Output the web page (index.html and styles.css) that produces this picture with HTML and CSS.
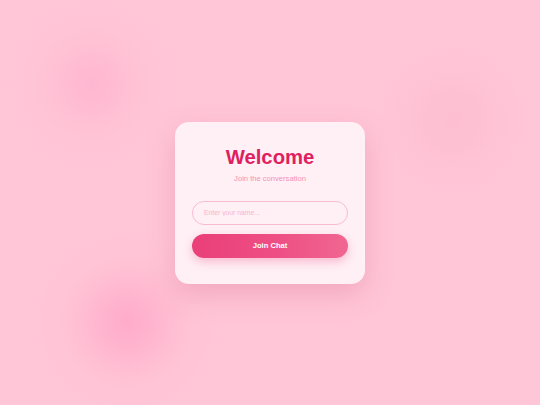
FILE: index.html
```html
<!DOCTYPE html>
<html lang="en">
<head>
<meta charset="utf-8">
<title>Join Chat</title>
<link rel="stylesheet" href="styles.css">
</head>
<body>
<main class="stage">
  <section class="card">
    <h1 class="title">Welcome</h1>
    <p class="subtitle">Join the conversation</p>
    <form class="form">
      <input class="name-input" type="text" placeholder="Enter your name...">
      <button class="join-btn" type="button">Join Chat</button>
    </form>
  </section>
</main>
</body>
</html>
```

FILE: styles.css
```css
html, body {
  margin: 0;
  padding: 0;
  height: 100%;
}
body {
  font-family: "Liberation Sans", Arial, sans-serif;
  background-color: #ffc6d7;
  background-image:
    radial-gradient(circle at 127px 322px, rgba(255, 168, 200, 0.9) 0, rgba(255, 172, 202, 0.7) 25px, rgba(255, 178, 205, 0.45) 45px, rgba(255, 186, 209, 0.2) 65px, rgba(255, 198, 215, 0) 90px),
    radial-gradient(circle at 92px 84px, rgba(255, 178, 206, 0.75) 0, rgba(255, 180, 207, 0.55) 25px, rgba(255, 186, 210, 0.3) 48px, rgba(255, 192, 212, 0.1) 68px, rgba(255, 195, 214, 0) 85px),
    radial-gradient(circle at 453px 120px, rgba(251, 184, 204, 0.6) 0, rgba(251, 186, 205, 0.45) 30px, rgba(252, 190, 208, 0.2) 55px, rgba(252, 196, 214, 0) 75px);
  overflow: hidden;
}
.stage {
  height: 100%;
  display: flex;
  align-items: center;
  justify-content: center;
}
.card {
  width: 190px;
  box-sizing: border-box;
  padding: 24px 17px 26px;
  background: #fff0f5;
  border-radius: 14px;
  box-shadow: 0 10px 28px rgba(210, 90, 130, 0.28);
  display: flex;
  flex-direction: column;
  align-items: center;
}
.title {
  margin: 0;
  font-size: 20.3px;
  font-weight: 700;
  line-height: 23px;
  color: #df1f5f;
}
.subtitle {
  margin: 5px 0 0;
  font-size: 7.6px;
  line-height: 9px;
  color: #f590b4;
}
.form {
  margin-top: 18px;
  width: 100%;
  display: flex;
  flex-direction: column;
  gap: 9px;
}
.name-input {
  box-sizing: border-box;
  width: 100%;
  height: 24px;
  margin: 0;
  padding: 0 11px;
  border: 1px solid #f8bcd2;
  border-radius: 12px;
  background: #fff0f6;
  font-family: "Liberation Sans", Arial, sans-serif;
  font-size: 6.8px;
  color: #d81b60;
  outline: none;
}
.name-input::placeholder {
  color: #f8b4cc;
}
.join-btn {
  box-sizing: border-box;
  width: 100%;
  height: 24px;
  margin: 0;
  padding: 0;
  border: none;
  border-radius: 12px;
  background: linear-gradient(90deg, #ea3f79 0%, #ee4f84 55%, #f06792 100%);
  box-shadow: 0 4px 10px rgba(236, 64, 122, 0.3);
  color: #ffffff;
  font-family: "Liberation Sans", Arial, sans-serif;
  font-size: 7.6px;
  font-weight: 700;
}
```
